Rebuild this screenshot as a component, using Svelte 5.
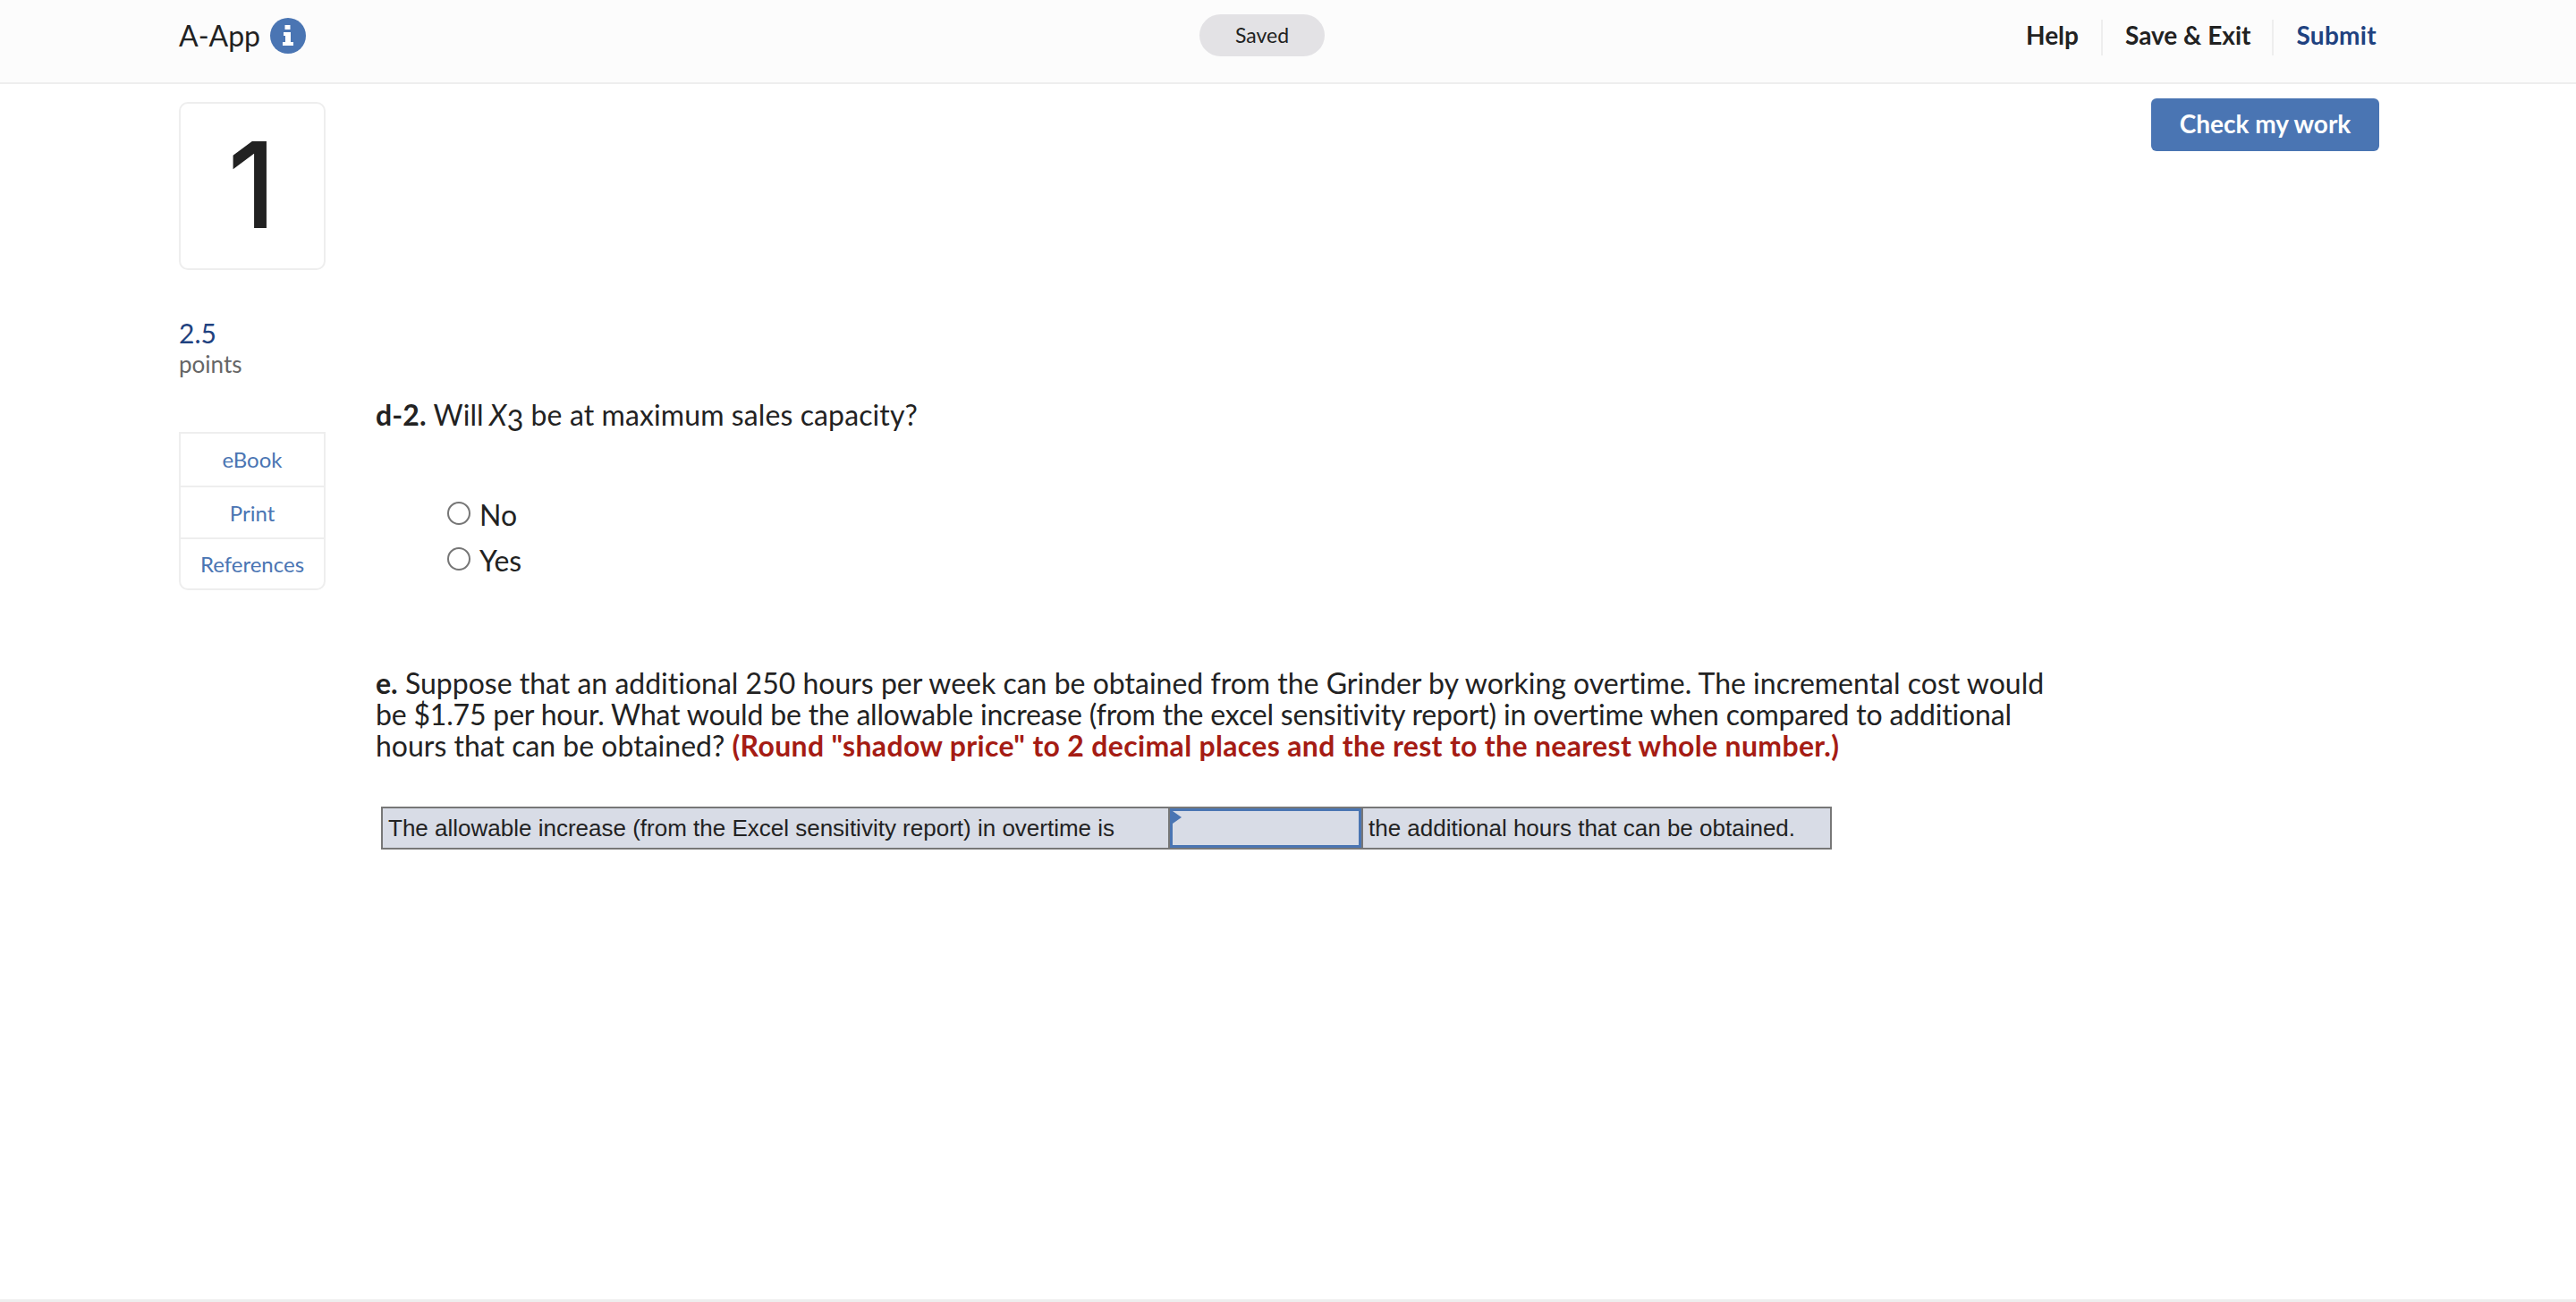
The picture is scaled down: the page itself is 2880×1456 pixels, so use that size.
<script>
  const links = ['eBook', 'Print', 'References'];
</script>

<div class="page">
  <header class="top">
    <div class="brand">
      <span class="name">A-App</span>
      <svg class="info" viewBox="0 0 40 40" width="40" height="40" aria-hidden="true">
        <circle cx="20" cy="20" r="20" fill="#4a75b3" />
        <rect x="16.5" y="8" width="6" height="5" fill="#fff" />
        <path d="M15 16h8v11h3v4H14v-4h3v-7h-2z" fill="#fff" />
      </svg>
    </div>
    <div class="saved">Saved</div>
    <nav class="actions">
      <span class="act first">Help</span>
      <span class="act">Save &amp; Exit</span>
      <span class="act submit">Submit</span>
    </nav>
  </header>

  <main class="body">
    <aside class="side">
      <div class="num">1</div>
      <div class="pts">2.5</div>
      <div class="pl">points</div>
      <div class="links">
        {#each links as l}
          <div class="link">{l}</div>
        {/each}
      </div>
    </aside>

    <section class="content">
      <p class="q">
        <b>d-2.</b> Will <i>X</i><sub>3</sub> be at maximum sales capacity?
      </p>
      <div class="opts">
        <label class="opt"><input type="radio" name="a" /><span>No</span></label>
        <label class="opt"><input type="radio" name="a" /><span>Yes</span></label>
      </div>
      <p class="e">
        <b>e.</b> Suppose that an additional 250 hours per week can be obtained from the Grinder by working overtime. The incremental cost would <span class="tight">be $1.75 per hour. What would be the allowable increase (from the excel sensitivity report) in overtime when compared to additional</span> hours that can be obtained? <b class="red">(Round "shadow price" to 2 decimal places and the rest to the nearest whole number.)</b>
      </p>
      <div class="sheet">
        <div class="cell c1">The allowable increase (from the Excel sensitivity report) in overtime is</div>
        <div class="input"><div class="box"><span class="flag"></span></div></div>
        <div class="cell c3">the additional hours that can be obtained.</div>
      </div>
    </section>

    <div class="right">
      <button class="check">Check my work</button>
    </div>
  </main>

  <div class="foot"></div>
</div>

<style>
  :global(body) {
    margin: 0;
    background: #fff;
  }
  .page {
    height: 1456px;
    display: flex;
    flex-direction: column;
    font-family: "Lato", "Open Sans", sans-serif;
    font-variant-ligatures: none;
    color: #222;
    overflow: hidden;
  }
  .top {
    height: 92px;
    flex: none;
    background: #fcfcfc;
    border-bottom: 2px solid #eee;
    display: grid;
    grid-template-columns: 1141px 140px 1fr;
    align-items: center;
    padding: 0 220px 0 200px;
  }
  .brand {
    display: flex;
    align-items: center;
    gap: 11px;
    height: 80px;
    margin-bottom: 12px;
  }
  .name {
    font-size: 32px;
    padding-bottom: 2px;
  }
  .saved {
    height: 47px;
    border-radius: 24px;
    background: #e3e2e5;
    font-size: 23px;
    display: flex;
    align-items: center;
    justify-content: center;
    margin-bottom: 13px;
    padding-bottom: 1px;
    box-sizing: border-box;
  }
  .actions {
    justify-self: end;
    display: flex;
    align-items: center;
    height: 40px;
    margin-bottom: 8px;
    font-size: 28px;
    font-weight: 700;
  }
  .act {
    padding: 0 25px 5px;
    border-left: 2px solid #eee;
    line-height: 35px;
  }
  .act.first {
    border-left: 0;
  }
  .submit {
    color: #1f4280;
    padding-right: 3px;
    letter-spacing: 0.3px;
    margin-left: -1px;
  }
  .body {
    flex: 1;
    display: flex;
    padding-left: 200px;
  }
  .side {
    width: 164px;
    flex: none;
    padding-top: 20px;
  }
  .num {
    box-sizing: border-box;
    height: 188px;
    border: 2px solid #eee;
    border-radius: 10px;
    font-family: "Inter", sans-serif;
    font-size: 130px;
    font-weight: 400;
    -webkit-text-stroke: 2px #222;
    line-height: 182px;
    text-align: center;
    color: #222;
  }
  .pts {
    margin-top: 52px;
    font-size: 30px;
    line-height: 36px;
    color: #1f4280;
  }
  .pl {
    font-size: 26px;
    line-height: 34px;
    color: #666;
  }
  .links {
    margin-top: 59px;
    border: 2px solid #eee;
    border-radius: 0 0 10px 10px;
    color: #4a75b3;
    font-size: 24px;
    text-align: center;
  }
  .link {
    line-height: 54px;
    padding-top: 2px;
  }
  .link:first-child {
    line-height: 58px;
    padding-top: 0;
  }
  .link:last-child {
    line-height: 55px;
    padding-top: 0;
  }
  .link + .link {
    border-top: 2px solid #eee;
  }
  .content {
    width: 1880px;
    flex: none;
    margin-left: 56px;
    font-size: 32px;
    line-height: 35px;
  }
  .q {
    margin: 352px 0 0;
    letter-spacing: 0.1px;
  }
  .q i {
    margin-left: -2px;
  }
  sub {
    font-size: 32px;
    line-height: 0;
    vertical-align: -6px;
  }
  .opts {
    margin: 73px 0 0 80px;
    display: flex;
    flex-direction: column;
    gap: 12px;
  }
  .opt {
    display: flex;
    align-items: center;
    gap: 10px;
  }
  .opt span {
    padding-top: 4px;
  }
  .opt input {
    appearance: none;
    box-sizing: border-box;
    width: 26px;
    height: 26px;
    margin: 0;
    background: #fff;
    border: 2px solid #767676;
    border-radius: 50%;
  }
  .e {
    margin: 102px 0 0;
  }
  .tight {
    letter-spacing: -0.18px;
  }
  .red {
    color: #a51c14;
    letter-spacing: 0.33px;
  }
  .sheet {
    margin: 51px 0 0 6px;
    width: 1622px;
    height: 48px;
    box-sizing: border-box;
    border: 2px solid #777;
    background: #d8dce6;
    display: flex;
    font-family: "Liberation Sans", Arial, sans-serif;
    font-size: 26px;
    line-height: 44px;
    color: #222;
  }
  .cell {
    white-space: nowrap;
    padding-left: 6px;
  }
  .c1 {
    width: 872px;
  }
  .input {
    width: 218px;
    box-sizing: border-box;
    flex: none;
    border: solid #777;
    border-width: 0 2px;
    display: flex;
  }
  .box {
    position: relative;
    flex: 1;
    box-sizing: border-box;
    border: 3px solid #4a75b3;
  }
  .flag {
    position: absolute;
    left: 0;
    top: 0;
    border-left: 10px solid #4a75b3;
    border-top: 7px solid transparent;
    border-bottom: 7px solid transparent;
  }
  .right {
    flex: 1;
    position: relative;
  }
  .check {
    position: absolute;
    top: 16px;
    left: 105px;
    width: 255px;
    height: 59px;
    padding: 0 0 3px;
    border: 0;
    border-radius: 6px;
    background: #4a75b3;
    color: #fff;
    font-family: inherit;
    font-size: 28px;
    font-weight: 700;
  }
  .foot {
    height: 3px;
    flex: none;
    background: #eee;
  }
</style>
